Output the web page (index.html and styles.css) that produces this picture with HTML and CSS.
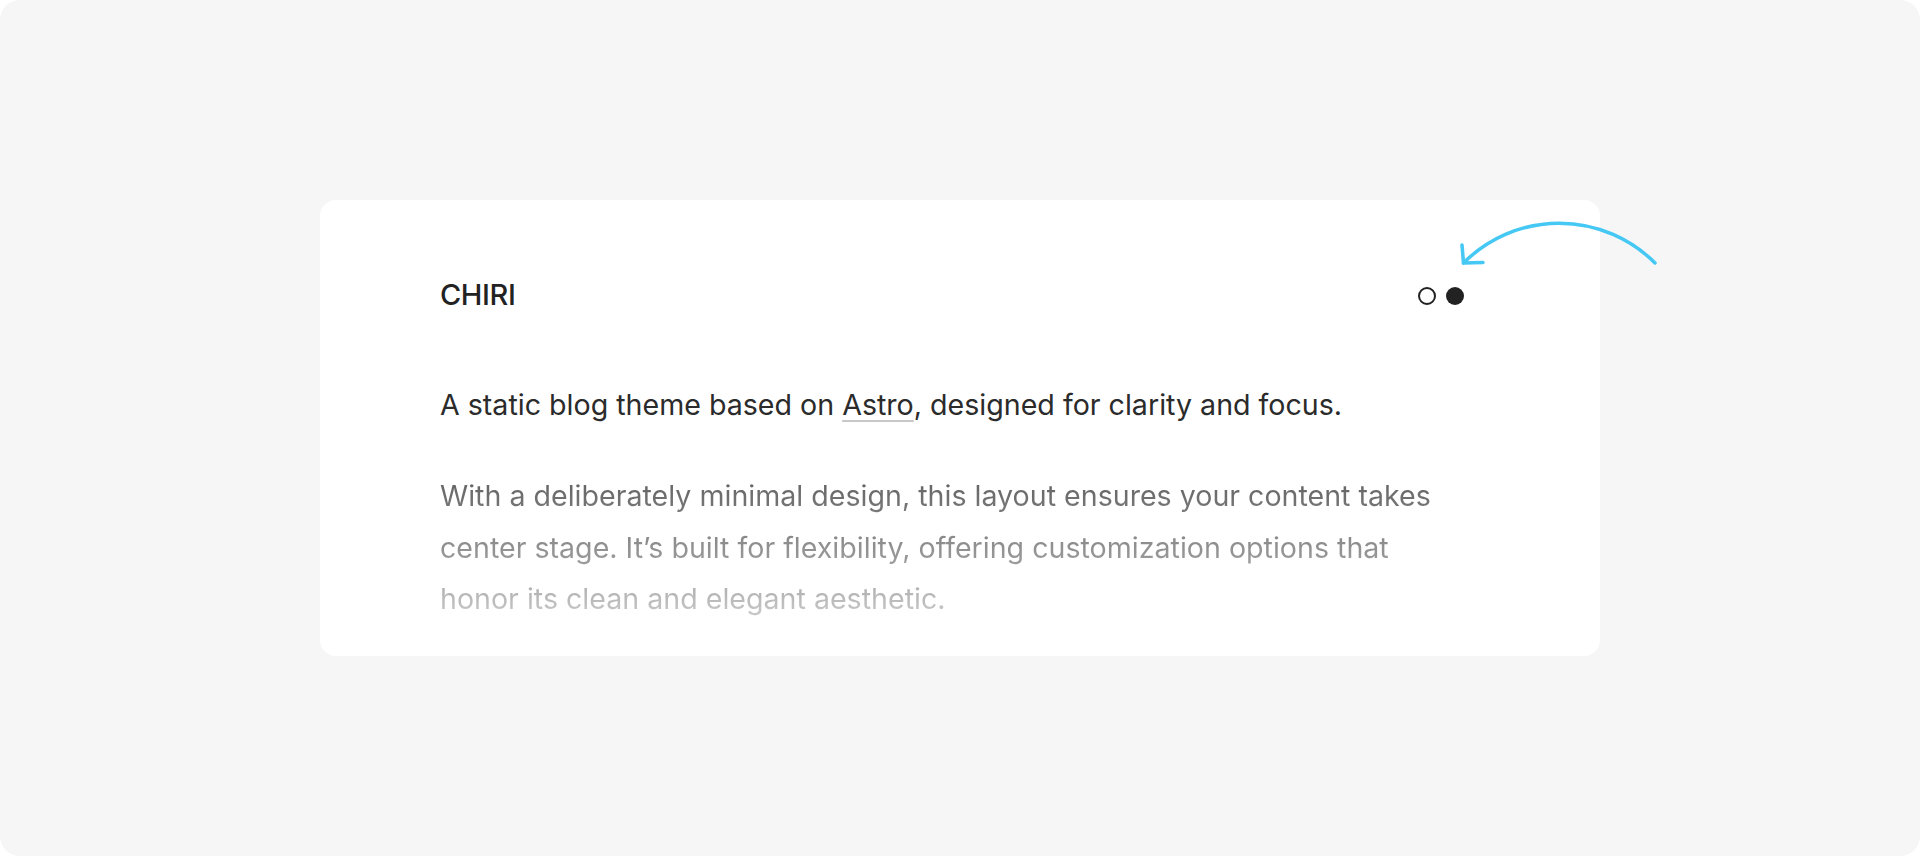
FILE: index.html
```html
<!DOCTYPE html>
<html lang="en">
<head>
<meta charset="utf-8">
<title>Chiri</title>
<link rel="stylesheet" href="styles.css">
</head>
<body>
<div class="frame">
  <div class="card">
    <header class="card-header">
      <span class="site-title">CHIRI</span>
      <div class="theme-toggle">
        <span class="dot dot-light"></span>
        <span class="dot dot-dark"></span>
      </div>
    </header>
    <p class="intro">A static blog theme based on <a class="link" href="#">Astro</a>, designed for clarity and focus.</p>
    <p class="desc">With a deliberately minimal design, this layout ensures your content takes center stage. It’s built for flexibility, offering customization options that honor its clean and elegant aesthetic.</p>
  </div>
  <svg class="arrow" width="220" height="70" viewBox="1450 210 220 70" fill="none">
    <path d="M1655 263 A 135 135 0 0 0 1463.5 263" stroke="#45c8f4" stroke-width="3.5" stroke-linecap="round"/>
    <path d="M1462 245 L1463.5 263 L1483 262.5" stroke="#45c8f4" stroke-width="3.5" stroke-linecap="round" stroke-linejoin="round"/>
  </svg>
</div>
</body>
</html>
```
FILE: styles.css
```css
html, body {
  margin: 0;
  padding: 0;
  background: #ffffff;
}
body {
  font-family: Inter, "Noto Sans", sans-serif;
}
.frame {
  position: relative;
  width: 1920px;
  height: 856px;
  background: #f6f6f6;
  border-radius: 20px;
  display: flex;
  align-items: center;
  justify-content: center;
}
.card {
  box-sizing: border-box;
  width: 1280px;
  height: 456px;
  background: #ffffff;
  border-radius: 16px;
  padding: 72px 136px 0 120px;
}
.card-header {
  display: flex;
  align-items: center;
  justify-content: space-between;
  height: 45px;
}
.site-title {
  font-size: 29px;
  font-weight: 500;
  letter-spacing: -0.4px;
  color: #222222;
  line-height: 45px;
}
.theme-toggle {
  display: flex;
  gap: 10px;
  align-items: center;
  padding-top: 2px;
}
.dot {
  box-sizing: border-box;
  width: 18px;
  height: 18px;
  border-radius: 50%;
}
.dot-light {
  border: 2.8px solid #222222;
}
.dot-dark {
  background: #222222;
}
.intro {
  margin: 63px 0 0;
  font-size: 28.6px;
  line-height: 50.4px;
  color: #2b2b2b;
}
.link {
  color: inherit;
  text-decoration: underline;
  text-decoration-color: #c8c8c8;
  text-decoration-thickness: 2px;
  text-underline-offset: 5px;
}
.desc {
  max-width: 1000px;
  margin: 40px 0 0;
  font-size: 28.6px;
  line-height: 51.5px;
  background: linear-gradient(to bottom, #5c5c5c 0%, #969696 55%, #d0d0d0 100%);
  -webkit-background-clip: text;
  background-clip: text;
  color: transparent;
}
.arrow {
  position: absolute;
  left: 1450px;
  top: 210px;
}
```
